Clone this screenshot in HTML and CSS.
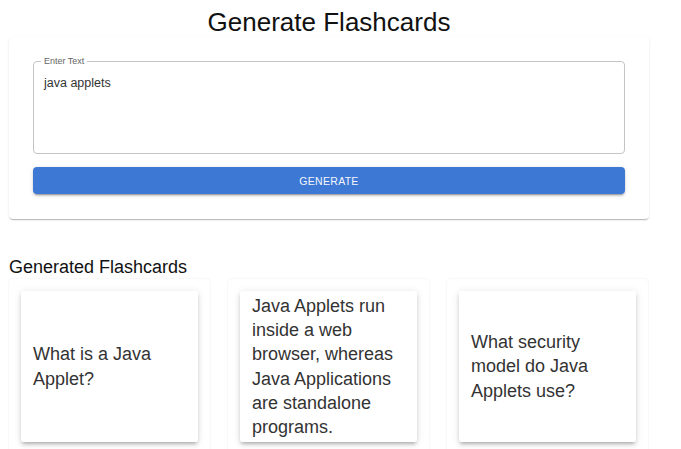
FILE: index.html
```html
<!DOCTYPE html>
<html lang="en">
<head>
<meta charset="utf-8">
<title>Generate Flashcards</title>
<link rel="stylesheet" href="styles.css">
</head>
<body>
<div class="page">
  <h1 class="title">Generate Flashcards</h1>
  <section class="paper">
    <div class="field">
      <span class="field-label">Enter Text</span>
      <div class="field-input">java applets</div>
    </div>
    <button class="btn" type="button">Generate</button>
  </section>
  <h2 class="subtitle">Generated Flashcards</h2>
  <div class="cards">
    <div class="card-outer">
      <div class="card-inner"><p class="card-text">What is a Java Applet?</p></div>
    </div>
    <div class="card-outer">
      <div class="card-inner"><p class="card-text">Java Applets run inside a web browser, whereas Java Applications are standalone programs.</p></div>
    </div>
    <div class="card-outer">
      <div class="card-inner"><p class="card-text">What security model do Java Applets use?</p></div>
    </div>
  </div>
</div>
</body>
</html>
```

FILE: styles.css
```css
* { box-sizing: border-box; }
html, body { margin: 0; padding: 0; background: #fff; }
body {
  font-family: "Liberation Sans", Arial, sans-serif;
  color: #222;
  overflow: hidden;
}
.page {
  width: 649px;
  padding: 7px 0 0 9px;
}
.title {
  margin: 0;
  font-size: 26px;
  font-weight: 400;
  line-height: 30px;
  text-align: center;
  color: #111;
}
.paper {
  height: 182px;
  padding: 24px 24px 25px;
  background: #fff;
  border-radius: 4px;
  box-shadow: 0 2px 1px -1px rgba(0,0,0,0.16), 0 1px 1px 0 rgba(0,0,0,0.10), 0 1px 3px 0 rgba(0,0,0,0.08);
  display: flex;
  flex-direction: column;
  gap: 13px;
}
.field {
  position: relative;
  height: 93px;
  border: 1px solid #c4c4c4;
  border-radius: 4px;
  padding: 14px 10px 0;
}
.field-label {
  position: absolute;
  top: -6px;
  left: 7px;
  padding: 0 3px;
  background: #fff;
  font-size: 9px;
  line-height: 11px;
  color: #666;
}
.field-input {
  font-size: 12.5px;
  line-height: 15px;
  color: #333;
}
.btn {
  height: 27px;
  border: 0;
  border-radius: 4px;
  background: #3d78d4;
  color: #f4f6fb;
  font-family: inherit;
  font-size: 10.5px;
  letter-spacing: 0.3px;
  text-transform: uppercase;
  box-shadow: 0 3px 1px -2px rgba(0,0,0,0.2), 0 2px 2px 0 rgba(0,0,0,0.14), 0 1px 5px 0 rgba(0,0,0,0.12);
  padding: 0;
}
.subtitle {
  margin: 36px 0 0;
  font-size: 18px;
  font-weight: 400;
  line-height: 24px;
  color: #111;
}
.cards {
  display: grid;
  grid-template-columns: repeat(3, 201px);
  column-gap: 18px;
}
.card-outer {
  padding: 12px;
  border-radius: 4px;
  background: #fff;
  box-shadow: 0 0 2px rgba(0,0,0,0.10);
}
.card-inner {
  height: 151px;
  padding: 0 12px;
  background: #fff;
  border-radius: 2px;
  box-shadow: 0 3px 3px -2px rgba(0,0,0,0.2), 0 3px 4px 0 rgba(0,0,0,0.12), 0 1px 8px 0 rgba(0,0,0,0.10);
  display: flex;
  align-items: center;
  overflow: hidden;
}
.card-text {
  margin: 0;
  font-size: 18px;
  line-height: 24.3px;
  color: #333;
}
```
